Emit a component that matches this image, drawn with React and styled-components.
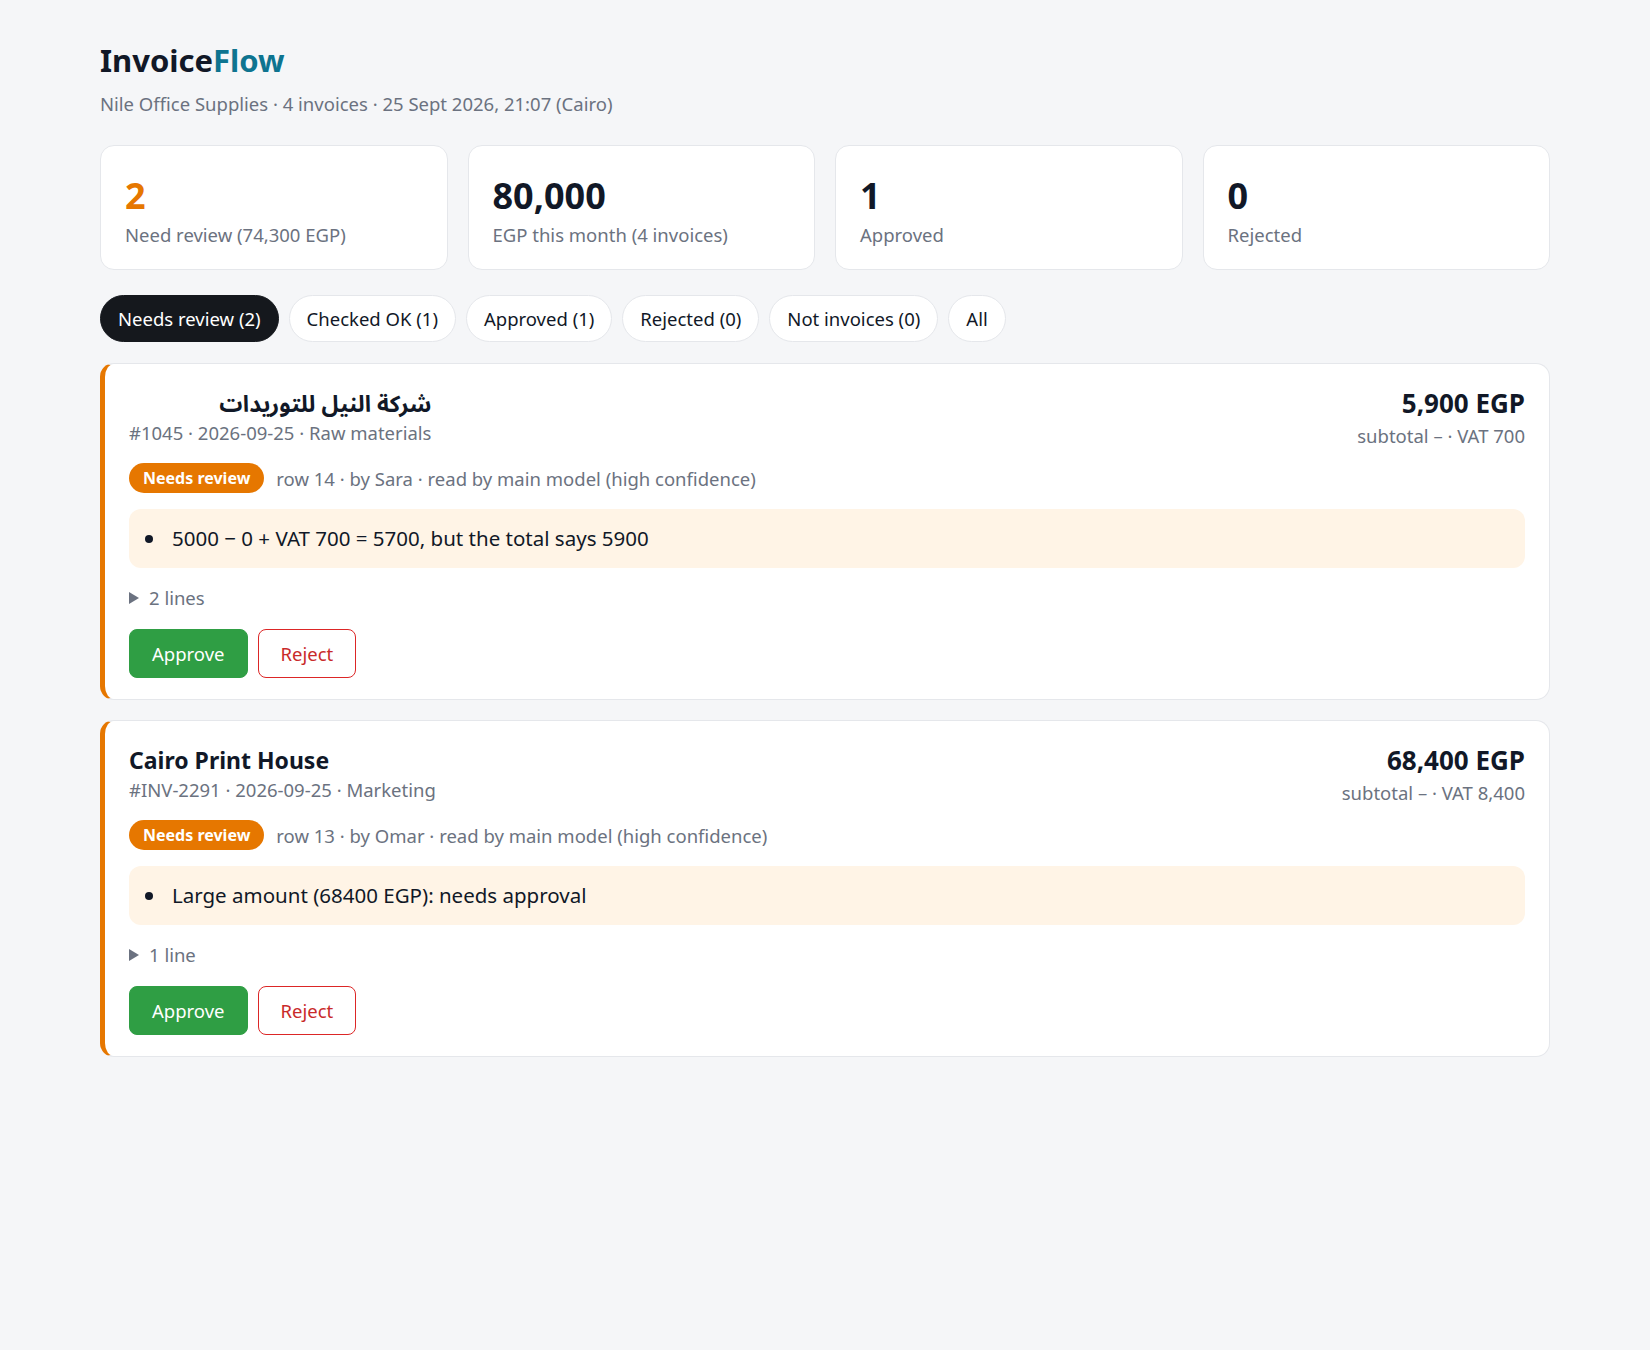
import styled, { createGlobalStyle } from "styled-components";

const GlobalStyle = createGlobalStyle`
  body {
    margin: 0;
    background: #f5f6f8;
    color: #111827;
    font-family: "Noto Sans", "Noto Sans Arabic", "DejaVu Sans", sans-serif;
  }
`;

const Page = styled.div`
  padding: 41px 100px 60px;
`;

const Title = styled.h1`
  margin: 0;
  font-size: 31px;
  line-height: 38px;
  font-weight: 700;
  color: #111827;
`;

const Accent = styled.span`
  color: #0e7490;
`;

const Subtitle = styled.div`
  margin-top: 11px;
  font-size: 18.5px;
  line-height: 27px;
  color: #6b7280;
`;

const StatGrid = styled.div`
  display: grid;
  grid-template-columns: repeat(4, 1fr);
  gap: 20px;
  margin-top: 28px;
`;

const StatCard = styled.div`
  background: #fff;
  border: 1px solid #e5e7eb;
  border-radius: 14px;
  padding: 27px 24px 21px;
`;

const StatValue = styled.div`
  font-size: 36px;
  line-height: 45px;
  font-weight: 700;
  color: ${(p) => (p.$accent ? "#e67700" : "#111827")};
`;

const StatLabel = styled.div`
  margin-top: 3px;
  font-size: 18.5px;
  line-height: 27px;
  color: #6b7280;
`;

const FilterRow = styled.div`
  display: flex;
  gap: 10px;
  margin-top: 25px;
`;

const FilterPill = styled.button`
  font: inherit;
  font-size: 18.5px;
  line-height: 27px;
  padding: 9px 17px;
  border-radius: 999px;
  border: 1px solid ${(p) => (p.$active ? "#15181d" : "#e5e7eb")};
  background: ${(p) => (p.$active ? "#15181d" : "#fff")};
  color: ${(p) => (p.$active ? "#fff" : "#111827")};
  cursor: pointer;
`;

const InvoiceList = styled.div`
  display: flex;
  flex-direction: column;
  gap: 20px;
  margin-top: 21px;
`;

const InvoiceCard = styled.div`
  background: #fff;
  border: 1px solid #e5e7eb;
  border-left: 5px solid #e67700;
  border-radius: 14px;
  padding: 24px 24px 21px;
`;

const CardHead = styled.div`
  display: flex;
  justify-content: space-between;
  align-items: flex-start;
`;

const Vendor = styled.div`
  font-size: 23px;
  line-height: 31px;
  font-weight: 700;
`;

const Meta = styled.div`
  font-size: 18.5px;
  line-height: 27px;
  color: #6b7280;
`;

const Amount = styled.div`
  text-align: right;
`;

const AmountValue = styled.div`
  font-size: 26px;
  line-height: 31px;
  font-weight: 700;
`;

const AmountSub = styled.div`
  margin-top: 3px;
  font-size: 18.5px;
  line-height: 27px;
  color: #6b7280;
`;

const StatusRow = styled.div`
  display: flex;
  align-items: center;
  gap: 12px;
  margin-top: 14px;
`;

const Badge = styled.span`
  display: inline-block;
  padding: 3px 14px;
  border-radius: 999px;
  background: #e67700;
  color: #fff;
  font-size: 16px;
  line-height: 24px;
  font-weight: 700;
`;

const IssueBox = styled.ul`
  margin: 16px 0 0;
  padding: 16px;
  list-style: none;
  background: #fff4e6;
  border-radius: 12px;
`;

const Issue = styled.li`
  display: flex;
  align-items: center;
  gap: 19px;
  font-size: 20.5px;
  line-height: 27px;
  color: #111827;

  &::before {
    content: "";
    flex: none;
    width: 8px;
    height: 8px;
    border-radius: 50%;
    background: #111827;
  }
`;

const Lines = styled.details`
  margin-top: 16px;
  font-size: 18.5px;
  line-height: 27px;
  color: #6b7280;

  summary {
    display: flex;
    align-items: center;
    gap: 10px;
    list-style: none;
    cursor: pointer;
  }

  summary::-webkit-details-marker {
    display: none;
  }

  summary::before {
    content: "";
    width: 0;
    height: 0;
    border-top: 6px solid transparent;
    border-bottom: 6px solid transparent;
    border-left: 10px solid #6b7280;
  }
`;

const Actions = styled.div`
  display: flex;
  gap: 10px;
  margin-top: 18px;
`;

const ActionButton = styled.button`
  font: inherit;
  font-size: 18.5px;
  line-height: 27px;
  padding: 10px 22px;
  border-radius: 8px;
  cursor: pointer;
  border: 1px solid ${(p) => (p.$reject ? "#dc2626" : "#2f9e44")};
  background: ${(p) => (p.$reject ? "#fff" : "#2f9e44")};
  color: ${(p) => (p.$reject ? "#c92a2a" : "#fff")};
`;

const stats = [
  { value: "2", label: "Need review (74,300 EGP)", accent: true },
  { value: "80,000", label: "EGP this month (4 invoices)" },
  { value: "1", label: "Approved" },
  { value: "0", label: "Rejected" },
];

const filters = [
  "Needs review (2)",
  "Checked OK (1)",
  "Approved (1)",
  "Rejected (0)",
  "Not invoices (0)",
  "All",
];

const invoices = [
  {
    vendor: "شركة النيل للتوريدات",
    meta: "#1045 · 2026-09-25 · Raw materials",
    total: "5,900 EGP",
    sub: "subtotal – · VAT 700",
    row: "row 14 · by Sara · read by main model (high confidence)",
    issues: ["5000 − 0 + VAT 700 = 5700, but the total says 5900"],
    lines: "2 lines",
  },
  {
    vendor: "Cairo Print House",
    meta: "#INV-2291 · 2026-09-25 · Marketing",
    total: "68,400 EGP",
    sub: "subtotal – · VAT 8,400",
    row: "row 13 · by Omar · read by main model (high confidence)",
    issues: ["Large amount (68400 EGP): needs approval"],
    lines: "1 line",
  },
];

const App = () => {
  return (
    <Page>
      <GlobalStyle />
      <Title>
        Invoice<Accent>Flow</Accent>
      </Title>
      <Subtitle>
        Nile Office Supplies · 4 invoices · 25 Sept 2026, 21:07 (Cairo)
      </Subtitle>

      <StatGrid>
        {stats.map((s) => (
          <StatCard key={s.label}>
            <StatValue $accent={s.accent}>{s.value}</StatValue>
            <StatLabel>{s.label}</StatLabel>
          </StatCard>
        ))}
      </StatGrid>

      <FilterRow>
        {filters.map((f, i) => (
          <FilterPill key={f} $active={i === 0}>
            {f}
          </FilterPill>
        ))}
      </FilterRow>

      <InvoiceList>
        {invoices.map((inv) => (
          <InvoiceCard key={inv.meta}>
            <CardHead>
              <div>
                <Vendor dir="auto">{inv.vendor}</Vendor>
                <Meta>{inv.meta}</Meta>
              </div>
              <Amount>
                <AmountValue>{inv.total}</AmountValue>
                <AmountSub>{inv.sub}</AmountSub>
              </Amount>
            </CardHead>
            <StatusRow>
              <Badge>Needs review</Badge>
              <Meta>{inv.row}</Meta>
            </StatusRow>
            <IssueBox>
              {inv.issues.map((t) => (
                <Issue key={t}>{t}</Issue>
              ))}
            </IssueBox>
            <Lines>
              <summary>{inv.lines}</summary>
            </Lines>
            <Actions>
              <ActionButton>Approve</ActionButton>
              <ActionButton $reject>Reject</ActionButton>
            </Actions>
          </InvoiceCard>
        ))}
      </InvoiceList>
    </Page>
  );
};

export default App;
